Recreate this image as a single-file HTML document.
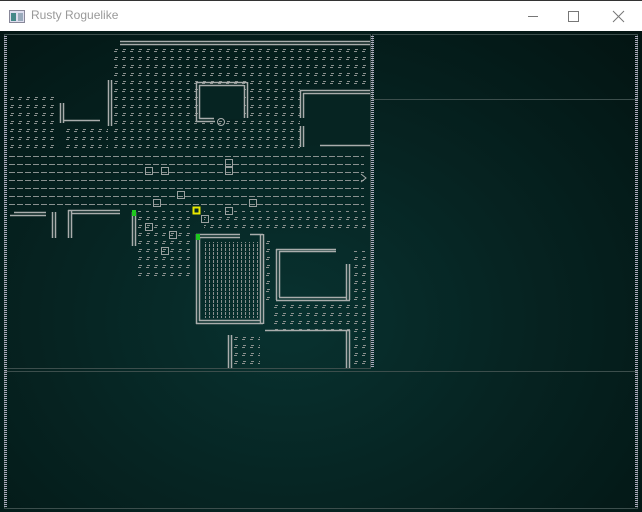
<!DOCTYPE html>
<html><head><meta charset="utf-8"><style>
html,body{margin:0;padding:0;width:642px;height:512px;overflow:hidden;background:#fff;font-family:"Liberation Sans",sans-serif}
#tb{position:absolute;left:0;top:0;width:642px;height:31px;background:#fff;border-top:1px solid #333}
#tb .t{position:absolute;left:31px;top:7px;font-size:12px;color:#999}
#main{position:absolute;left:0;top:31px;width:642px;height:481px;background:radial-gradient(ellipse at 45% 60%,#083230 0%,#062422 45%,#031412 100%)}
</style></head><body>
<div id="tb">
<svg style="position:absolute;left:9px;top:9px" width="16" height="13"><rect x="0.5" y="0.5" width="15" height="12" fill="#dde" stroke="#889"/><rect x="2" y="3" width="5" height="8" fill="#488"/><rect x="9" y="3" width="5" height="8" fill="#9ab"/></svg>
<span class="t">Rusty Roguelike</span>
<svg style="position:absolute;left:520px;top:8px" width="110" height="16" stroke="#777" fill="none">
<line x1="8" y1="7.5" x2="18" y2="7.5"/>
<rect x="48.5" y="2.5" width="10" height="10"/>
<path d="M93 2 L104 13 M104 2 L93 13"/>
</svg>
</div>
<div id="main"></div>
<svg style="position:absolute;left:0;top:0" width="642" height="512">
<defs>
<pattern id="fl" x="0" y="0" width="8" height="8" patternUnits="userSpaceOnUse"><rect x="3" y="1" width="3" height="1" fill="#8a908e"/><rect x="2" y="3" width="3" height="1" fill="#8a908e"/></pattern>
<pattern id="co" x="0" y="1" width="8" height="8" patternUnits="userSpaceOnUse"><rect x="1" y="3" width="6" height="1" fill="#8a9190"/></pattern>
<pattern id="vl" x="0" y="0" width="4" height="4" patternUnits="userSpaceOnUse"><rect x="1" y="0" width="1" height="3" fill="#8a8f8e"/></pattern>
<pattern id="dv" x="0" y="0" width="3" height="2" patternUnits="userSpaceOnUse"><rect x="0" y="0" width="3" height="1" fill="#aab"/></pattern>
</defs>
<g fill="none" stroke="#3c4e4c">
<rect x="4.5" y="34.5" width="366" height="334"/>
<rect x="372.5" y="34.5" width="265" height="65"/>
<rect x="4.5" y="371.5" width="633" height="137"/>
</g>
<rect x="4" y="35" width="3" height="473" fill="url(#dv)"/>
<rect x="371" y="35" width="3" height="333" fill="url(#dv)"/>
<rect x="635" y="35" width="3" height="473" fill="url(#dv)"/>
<g fill="url(#fl)">
<rect x="112" y="46" width="188" height="104"/>
<rect x="248" y="46" width="52" height="40"/>
<rect x="300" y="46" width="70" height="42"/>
<rect x="8" y="96" width="48" height="56"/>
<rect x="64" y="124" width="44" height="28"/>
<rect x="136" y="210" width="56" height="66"/>
<rect x="204" y="210" width="164" height="22"/>
<rect x="264" y="240" width="8" height="60"/>
<rect x="272" y="300" width="96" height="30"/>
<rect x="352" y="250" width="16" height="118"/>
<rect x="232" y="336" width="28" height="32"/>
</g>
<rect x="200" y="87" width="44" height="32" fill="#062422"/>
<rect x="304" y="95" width="66" height="50" fill="#062422"/>
<rect x="8" y="154" width="356" height="52" fill="url(#co)"/>
<rect x="203" y="242" width="56" height="76" fill="url(#vl)"/>
<g stroke="#a9adac" fill="none" stroke-width="1.5">
<path d="M120 41.5H370M120 44.5H370"/>
<path d="M196.5 82V122M199.5 85V119M196 82.5H247M199 85.5H244M244.5 85V118M247.5 82V118M196 121.5H215M199 118.5H214"/>
<circle cx="221" cy="122" r="3.5" stroke-width="1"/>
<path d="M300.5 90V118M303.5 93V118M300 90.5H370M303 93.5H370M300.5 126V147M303.5 126V147M320 145.5H370"/>
<path d="M108.5 80V126M111.5 80V126M60.5 103V123M63.5 103V123M63 120.5H100"/>
<path d="M52.5 212V238M55.5 212V238M68.5 210V238M71.5 210V238M68 210.5H120M71 213.5H120"/>
<path d="M132.5 212V246M135.5 212V246"/>
<path d="M196.5 234V324M199.5 237V321M196 234.5H240M199 237.5H240M250 234.5H263M260.5 234V324M263.5 234V324M196 323.5H263M199 320.5H260"/>
<path d="M276.5 249V300M279.5 251V297M276 249.5H336M279 251.5H336M346.5 264V300M349.5 264V300M276 300.5H350M279 297.5H347"/>
<path d="M228.5 335V368M231.5 335V368M265 330.5H350M346.5 330V368M349.5 330V368"/>
<path d="M10 215.5H46M14 212.5H46"/>
<path d="M361 174L366 178L361 182" stroke-width="1"/>
</g>
<rect x="132" y="210" width="4" height="6" fill="#1ec81e"/>
<rect x="196" y="234" width="4" height="6" fill="#1ec81e"/>
<g fill="none" stroke="#9aa09f" stroke-width="1">
<rect x="145.5" y="167.5" width="7" height="7"/><rect x="161.5" y="167.5" width="7" height="7"/>
<rect x="225.5" y="159.5" width="7" height="7"/><rect x="225.5" y="167.5" width="7" height="7"/>
<rect x="177.5" y="191.5" width="7" height="7"/><rect x="153.5" y="199.5" width="7" height="7"/>
<rect x="249.5" y="199.5" width="7" height="7"/><rect x="225.5" y="207.5" width="7" height="7"/>
<rect x="201.5" y="215.5" width="7" height="7"/><rect x="145.5" y="223.5" width="7" height="7"/>
<rect x="169.5" y="231.5" width="7" height="7"/><rect x="161.5" y="247.5" width="7" height="7"/>
</g>
<rect x="193.5" y="207.5" width="6" height="6" fill="none" stroke="#e8e800" stroke-width="2"/>
</svg>
</body></html>
